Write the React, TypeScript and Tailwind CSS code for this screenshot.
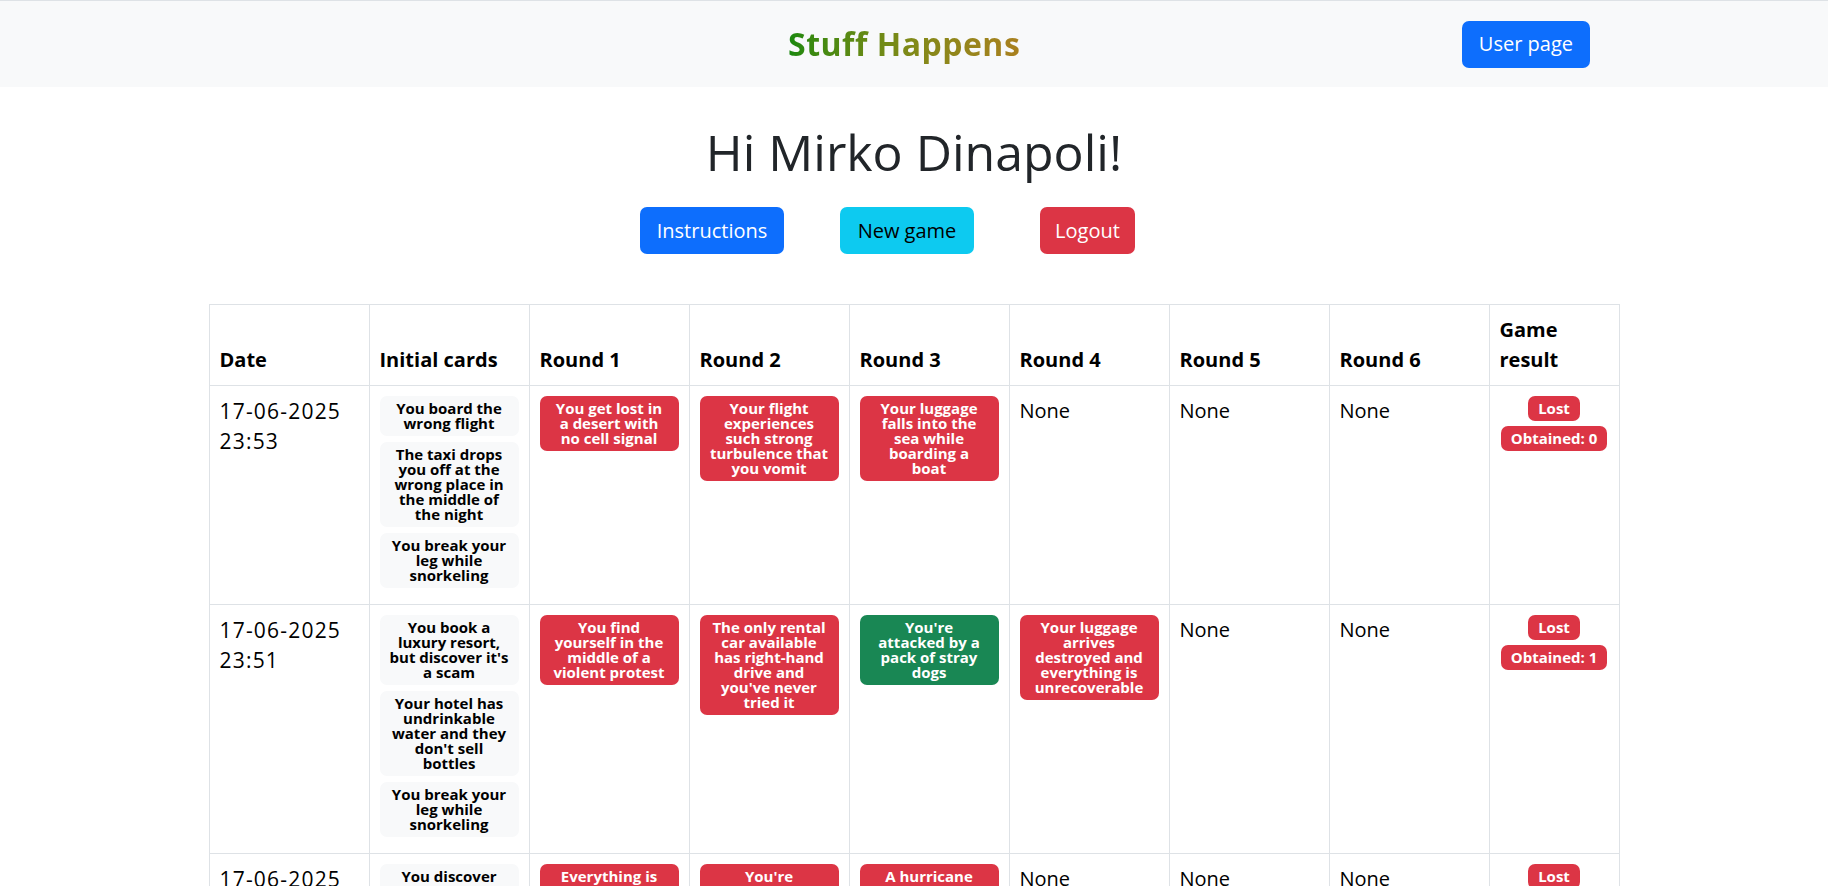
import React from 'react';

type Card = { text: string; won?: boolean };
type Game = {
  date: string;
  time: string;
  initial: string[];
  rounds: (Card | null)[];
  obtained: number;
};

// line breaks follow the card layout of the original table
const games: Game[] = [
  {
    date: '17-06-2025',
    time: '23:53',
    initial: [
      'You board the\nwrong flight',
      'The taxi drops\nyou off at the\nwrong place in\nthe middle of\nthe night',
      'You break your\nleg while\nsnorkeling',
    ],
    rounds: [
      { text: 'You get lost in\na desert with\nno cell signal' },
      { text: 'Your flight\nexperiences\nsuch strong\nturbulence that\nyou vomit' },
      { text: 'Your luggage\nfalls into the\nsea while\nboarding a\nboat' },
      null,
      null,
      null,
    ],
    obtained: 0,
  },
  {
    date: '17-06-2025',
    time: '23:51',
    initial: [
      "You book a\nluxury resort,\nbut discover it's\na scam",
      "Your hotel has\nundrinkable\nwater and they\ndon't sell\nbottles",
      'You break your\nleg while\nsnorkeling',
    ],
    rounds: [
      { text: 'You find\nyourself in the\nmiddle of a\nviolent protest' },
      { text: "The only rental\ncar available\nhas right-hand\ndrive and\nyou've never\ntried it" },
      { text: "You're\nattacked by a\npack of stray\ndogs", won: true },
      { text: 'Your luggage\narrives\ndestroyed and\neverything is\nunrecoverable' },
      null,
      null,
    ],
    obtained: 1,
  },
  {
    date: '17-06-2025',
    time: '23:48',
    initial: [
      'You discover\nyour hotel is\ninfested with\nbedbugs',
      'Your passport\nexpires during\nthe trip',
      'You miss the\nlast train of\nthe day',
    ],
    rounds: [
      { text: 'Everything is\nstolen from\nyour rental car' },
      { text: "You're\nattacked by a\nbear while\nhiking" },
      { text: 'A hurricane\nhits your\nholiday\ndestination' },
      null,
      null,
      null,
    ],
    obtained: 0,
  },
];

const headers = ['Date', 'Initial cards', 'Round 1', 'Round 2', 'Round 3', 'Round 4', 'Round 5', 'Round 6'];

function Badge({ children, className }: { children: React.ReactNode; className: string }) {
  return (
    <span
      className={`block whitespace-pre-line rounded-[7px] px-[8px] py-[5px] text-center text-[15px] font-bold leading-[15px] ${className}`}
    >
      {children}
    </span>
  );
}

export default function App() {
  return (
    <div className="min-h-screen bg-white font-['Open_Sans',sans-serif] text-[20px] text-[#212529]">
      {/* Navbar */}
      <nav className="flex h-[87px] items-center border-t border-[#dee2e6] bg-[#f8f9fa]">
        <span className="ml-[788px] bg-gradient-to-r from-[#16880e] via-[#7d8a18] to-[#a9801f] bg-clip-text text-[32px] font-bold tracking-[0.5px] text-transparent">
          Stuff Happens
        </span>
        <button className="ml-auto mr-[238px] h-[47px] rounded-[7px] bg-[#0d6efd] px-[17px] text-[20px] text-white">
          User page
        </button>
      </nav>

      <h1 className="mt-[35px] text-center text-[50px] leading-[60px] text-[#212529]">Hi Mirko Dinapoli!</h1>

      <div className="mt-[25px] flex justify-center pr-[53px]">
        <button className="h-[47px] w-[144px] rounded-[7px] bg-[#0d6efd] text-[20px] text-white">Instructions</button>
        <button className="ml-[56px] h-[47px] w-[134px] rounded-[7px] bg-[#0dcaf0] text-[20px] text-black">New game</button>
        <button className="ml-[66px] h-[47px] w-[95px] rounded-[7px] bg-[#dc3545] text-[20px] text-white">Logout</button>
      </div>

      <table className="mx-auto mt-[50px] w-[1410px] table-fixed border-collapse text-black">
        <colgroup>
          {headers.map((h) => (
            <col key={h} className="w-[160px]" />
          ))}
          <col className="w-[130px]" />
        </colgroup>
        <thead>
          <tr>
            {headers.map((h) => (
              <th key={h} className="border border-[#dee2e6] p-[10px] text-left align-bottom text-[20px] font-bold leading-[30px]">
                {h}
              </th>
            ))}
            <th className="border border-[#dee2e6] p-[10px] text-left align-bottom text-[20px] font-bold leading-[30px]">
              Game result
            </th>
          </tr>
        </thead>
        <tbody>
          {games.map((g, i) => (
            <tr key={i}>
              <td className="border border-[#dee2e6] p-[10px] align-top text-[21px] leading-[30px] tracking-[1.2px]">
                {g.date}
                <br />
                {g.time}
              </td>
              <td className="border border-[#dee2e6] p-[10px] align-top">
                {g.initial.map((c) => (
                  <Badge key={c} className="mb-[6px] bg-[#f8f9fa] text-black">
                    {c}
                  </Badge>
                ))}
              </td>
              {g.rounds.map((r, j) => (
                <td key={j} className="border border-[#dee2e6] p-[10px] align-top leading-[30px]">
                  {r ? (
                    <Badge className={r.won ? 'bg-[#198754] text-white' : 'bg-[#dc3545] text-white'}>{r.text}</Badge>
                  ) : (
                    <span className="block leading-[30px]">None</span>
                  )}
                </td>
              ))}
              <td className="border border-[#dee2e6] p-[10px] align-top">
                <div className="flex flex-col items-center gap-[5px]">
                  <span className="rounded-[7px] bg-[#dc3545] px-[10px] py-[5px] text-[15px] font-bold leading-[15px] text-white">Lost</span>
                  <span className="rounded-[7px] bg-[#dc3545] px-[10px] py-[5px] text-[15px] font-bold leading-[15px] text-white">
                    Obtained: {g.obtained}
                  </span>
                </div>
              </td>
            </tr>
          ))}
        </tbody>
      </table>
    </div>
  );
}
